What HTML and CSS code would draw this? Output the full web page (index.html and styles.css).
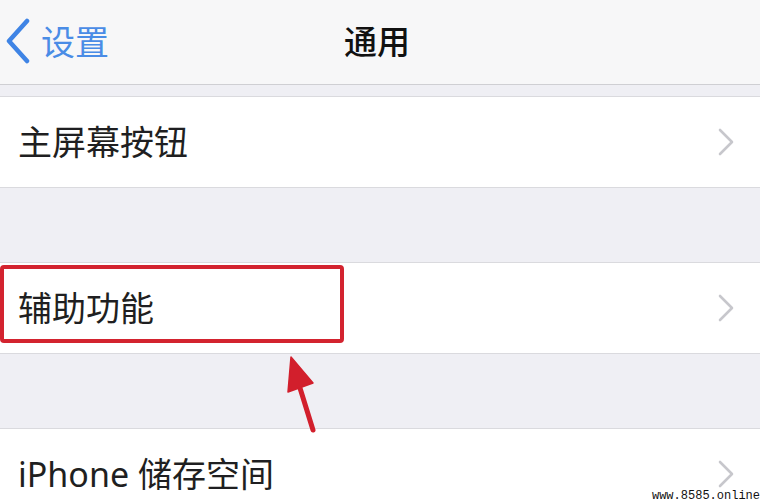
FILE: index.html
```html
<!DOCTYPE html>
<html lang="zh-CN">
<head>
<meta charset="utf-8">
<title>通用</title>
<link rel="stylesheet" href="styles.css">
</head>
<body>
<div class="screen">
  <header class="nav">
    <a class="back">
      <svg class="back-icon" width="28" height="46" viewBox="0 0 28 46"><path d="M23 3 L5 23 L23 43" fill="none" stroke="#3f84e5" stroke-width="4.5" stroke-linecap="round" stroke-linejoin="round"/></svg>
      <span class="back-label">设置</span>
    </a>
    <h1 class="title">通用</h1>
    <span class="spacer"></span>
  </header>

  <section class="group group-first">
    <div class="cell">
      <span class="label">主屏幕按钮</span>
      <svg class="chev" width="18" height="28" viewBox="0 0 18 28"><path d="M3 2 L15 14 L3 26" fill="none" stroke="#c7c7cc" stroke-width="2.6" stroke-linecap="round" stroke-linejoin="round"/></svg>
    </div>
  </section>

  <section class="group">
    <div class="cell">
      <span class="label">辅助功能</span>
      <svg class="chev" width="18" height="28" viewBox="0 0 18 28"><path d="M3 2 L15 14 L3 26" fill="none" stroke="#c7c7cc" stroke-width="2.6" stroke-linecap="round" stroke-linejoin="round"/></svg>
    </div>
    <span class="mark"></span>
  </section>

  <section class="group">
    <div class="cell">
      <span class="label">iPhone 储存空间</span>
      <svg class="chev" width="18" height="28" viewBox="0 0 18 28"><path d="M3 2 L15 14 L3 26" fill="none" stroke="#c7c7cc" stroke-width="2.6" stroke-linecap="round" stroke-linejoin="round"/></svg>
    </div>
  </section>

  <svg class="arrow" width="40" height="90" viewBox="0 0 40 90">
    <path d="M33 80 L20 38" fill="none" stroke="#d21f2c" stroke-width="5" stroke-linecap="round"/>
    <path d="M11 7 L8 42 L33 33 Z" fill="#d21f2c" stroke="#d21f2c" stroke-width="1.5" stroke-linejoin="round"/>
  </svg>

  <span class="watermark">www.8585.online</span>
</div>
</body>
</html>
```

FILE: styles.css
```css
* { box-sizing: border-box; }

html, body {
  margin: 0;
  padding: 0;
}

body {
  width: 760px;
  height: 504px;
  overflow: hidden;
  background: #efeff4;
  font-family: "Noto Sans", "Noto Sans CJK SC", sans-serif;
  color: #1d1d1f;
}

.screen {
  position: relative;
  width: 760px;
  height: 504px;
  overflow: hidden;
  background: #efeff4;
}

.nav {
  height: 85px;
  background: #f7f7f8;
  border-bottom: 1px solid #cfcfd3;
  display: grid;
  grid-template-columns: 1fr auto 1fr;
  align-items: center;
  padding: 0 10px 0 4px;
}

.back {
  display: flex;
  align-items: center;
  gap: 9px;
  color: #4a8ce6;
  margin-top: -2px;
}

.back-icon { display: block; }

.back-label {
  font-family: "Noto Sans CJK SC", sans-serif;
  font-size: 34px;
  line-height: 1;
  color: #4a8ce6;
}

.title {
  margin: 0;
  font-family: "Noto Sans CJK SC", sans-serif;
  font-size: 33px;
  font-weight: 500;
  line-height: 1;
  color: #111;
  margin-top: -4px;
}

.group {
  position: relative;
  margin-top: 74px;
  background: #fff;
  border-top: 1px solid #dadade;
  border-bottom: 1px solid #dadade;
}

.group-first { margin-top: 11px; }

.cell {
  height: 90px;
  display: flex;
  align-items: center;
  justify-content: space-between;
  padding: 0 25px 0 18px;
}

.label {
  font-size: 34px;
  line-height: 1;
  color: #1f1f21;
}

.chev { display: block; }

.mark {
  position: absolute;
  left: 0;
  top: 2px;
  width: 344px;
  height: 78px;
  border: 4px solid #d3232f;
  border-radius: 4px;
}

.arrow {
  position: absolute;
  left: 280px;
  top: 350px;
}

.watermark {
  position: absolute;
  right: 0;
  bottom: 1px;
  font-family: "Liberation Mono", monospace;
  font-size: 12px;
  line-height: 13px;
  color: #111;
  background: #fff;
  padding-left: 1px;
}
```
